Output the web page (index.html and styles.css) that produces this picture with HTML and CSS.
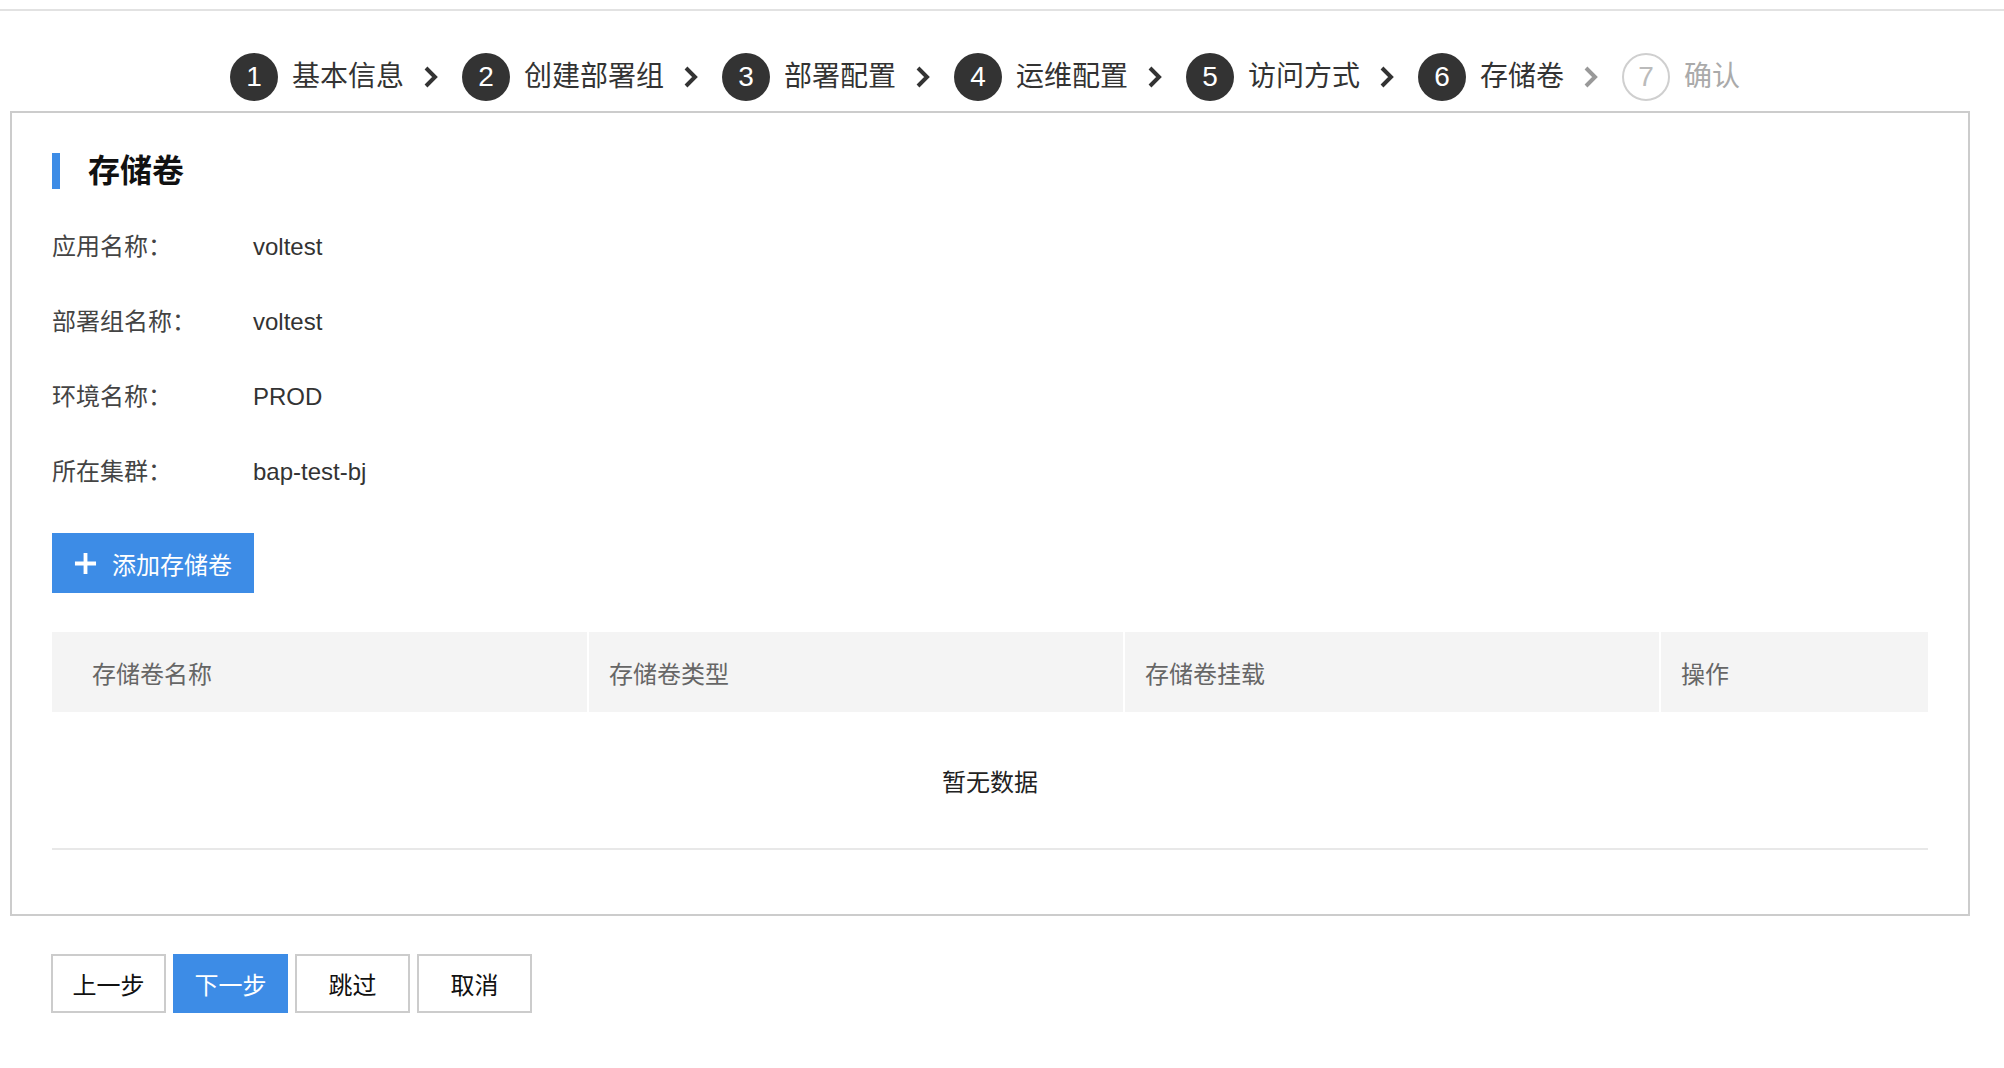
FILE: index.html
```html
<!DOCTYPE html>
<html lang="zh-CN">
<head>
    <meta charset="UTF-8">
    <title>存储卷</title>
    <link rel="stylesheet" href="styles.css">
</head>
<body>
    <div class="top-line"></div>

    <!-- Steps -->
    <div class="steps">
        <div class="step"><span class="step-num">1</span><span class="step-title">基本信息</span></div>
        <svg class="step-arrow" viewBox="0 0 16 24"><polyline points="3,3 12,12 3,21"/></svg>
        <div class="step"><span class="step-num">2</span><span class="step-title">创建部署组</span></div>
        <svg class="step-arrow" viewBox="0 0 16 24"><polyline points="3,3 12,12 3,21"/></svg>
        <div class="step"><span class="step-num">3</span><span class="step-title">部署配置</span></div>
        <svg class="step-arrow" viewBox="0 0 16 24"><polyline points="3,3 12,12 3,21"/></svg>
        <div class="step"><span class="step-num">4</span><span class="step-title">运维配置</span></div>
        <svg class="step-arrow" viewBox="0 0 16 24"><polyline points="3,3 12,12 3,21"/></svg>
        <div class="step"><span class="step-num">5</span><span class="step-title">访问方式</span></div>
        <svg class="step-arrow" viewBox="0 0 16 24"><polyline points="3,3 12,12 3,21"/></svg>
        <div class="step"><span class="step-num">6</span><span class="step-title">存储卷</span></div>
        <svg class="step-arrow muted" viewBox="0 0 16 24"><polyline points="3,3 12,12 3,21"/></svg>
        <div class="step todo"><span class="step-num">7</span><span class="step-title">确认</span></div>
    </div>

    <!-- Card -->
    <div class="card">
        <h2 class="card-title">存储卷</h2>

        <div class="info-row"><span class="info-label">应用名称：</span><span class="info-value">voltest</span></div>
        <div class="info-row"><span class="info-label">部署组名称：</span><span class="info-value">voltest</span></div>
        <div class="info-row"><span class="info-label">环境名称：</span><span class="info-value">PROD</span></div>
        <div class="info-row"><span class="info-label">所在集群：</span><span class="info-value">bap-test-bj</span></div>

        <button class="add-button">
            <svg class="plus" viewBox="0 0 24 24"><path d="M12 1v22M1 12h22"/></svg>
            添加存储卷
        </button>

        <table class="vol-table">
            <colgroup>
                <col class="col-wide">
                <col class="col-wide">
                <col class="col-wide">
                <col>
            </colgroup>
            <thead>
                <tr>
                    <th>存储卷名称</th>
                    <th>存储卷类型</th>
                    <th>存储卷挂载</th>
                    <th>操作</th>
                </tr>
            </thead>
            <tbody>
                <tr><td class="empty" colspan="4">暂无数据</td></tr>
            </tbody>
        </table>
    </div>

    <!-- Actions -->
    <div class="actions">
        <button class="btn">上一步</button>
        <button class="btn btn-primary">下一步</button>
        <button class="btn">跳过</button>
        <button class="btn">取消</button>
    </div>
</body>
</html>
```

FILE: styles.css
```css
/* Reset */
body, html {
    margin: 0;
    padding: 0;
    background: #fff;
    color: #333;
    font-family: "Liberation Sans", "Noto Sans CJK SC", sans-serif;
}

.top-line {
    margin-top: 9px;
    height: 2px;
    background: #e2e2e2;
}

/* Steps */
.steps {
    display: flex;
    align-items: center;
    height: 48px;
    margin: 42px 0 0 230px;
}

.step {
    display: flex;
    align-items: center;
}

.step-num {
    width: 48px;
    height: 48px;
    box-sizing: border-box;
    border-radius: 50%;
    background: #333;
    color: #fff;
    font-size: 28px;
    line-height: 48px;
    text-align: center;
}

.step-title {
    margin-left: 14px;
    font-size: 28px;
    line-height: 48px;
    color: #333;
}

.step.todo .step-num {
    background: #fff;
    border: 2px solid #cfcfcf;
    color: #bbb;
    line-height: 44px;
}

.step.todo .step-title {
    color: #aaa;
}

.step-arrow {
    width: 16px;
    height: 24px;
    margin: 0 23px 0 19px;
    fill: none;
    stroke: #333;
    stroke-width: 4;
}

.step-arrow.muted {
    stroke: #999;
}

/* Card */
.card {
    width: 1960px;
    box-sizing: border-box;
    margin: 10px 0 0 10px;
    padding: 40px 40px 64px;
    border: 2px solid #ccc;
}

.card-title {
    margin: 0 0 40px;
    height: 36px;
    border-left: 8px solid #3d8ce6;
    padding-left: 28px;
    font-size: 32px;
    line-height: 36px;
    font-weight: bold;
    color: #111;
}

.info-row {
    display: flex;
    height: 36px;
    margin-bottom: 39px;
    font-size: 24px;
    line-height: 36px;
}

.info-label {
    width: 201px;
    color: #444;
}

.info-value {
    color: #333;
}

.add-button {
    display: flex;
    align-items: center;
    height: 60px;
    margin-top: 43px;
    padding: 0 22px 0 22px;
    border: none;
    background: #3d8ce6;
    color: #fff;
    font-family: inherit;
    font-size: 24px;
    cursor: pointer;
}

.plus {
    width: 23px;
    height: 23px;
    margin-right: 15px;
    fill: none;
    stroke: #fff;
    stroke-width: 4;
}

/* Table */
.vol-table {
    width: 100%;
    margin-top: 39px;
    border-collapse: collapse;
    table-layout: fixed;
}

.col-wide {
    width: 536px;
}

.vol-table th {
    height: 80px;
    padding: 0 20px;
    background: #f4f4f4;
    border-left: 2px solid #fff;
    color: #666;
    font-size: 24px;
    font-weight: normal;
    text-align: left;
}

.vol-table th:first-child {
    border-left: none;
    padding-left: 40px;
}

.vol-table .empty {
    height: 134px;
    border-bottom: 2px solid #e8e8e8;
    text-align: center;
    font-size: 24px;
    color: #222;
}

/* Bottom buttons */
.actions {
    display: flex;
    gap: 7px;
    margin: 38px 0 0 51px;
}

.btn {
    width: 115px;
    height: 59px;
    border: 2px solid #ccc;
    background: #fff;
    color: #111;
    font-family: inherit;
    font-size: 24px;
    cursor: pointer;
}

.btn-primary {
    border-color: #3d8ce6;
    background: #3d8ce6;
    color: #fff;
}
```
